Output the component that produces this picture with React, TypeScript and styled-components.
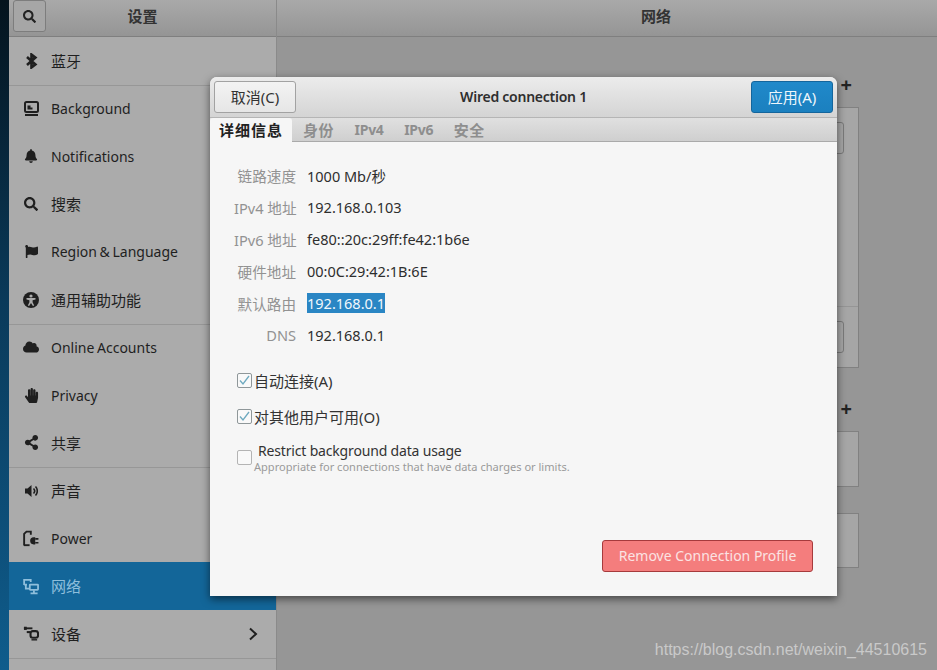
import React from "react";
import styled, { createGlobalStyle } from "styled-components";
import { FaCloud, FaFlag, FaHandPaper, FaShareAlt, FaBell, FaSearch } from "react-icons/fa";

const GlobalStyle = createGlobalStyle`
  html, body {
    margin: 0;
    padding: 0;
    background: #969696;
  }
  * {
    box-sizing: border-box;
  }
`;

const FONT = `"Noto Sans", "Noto Sans CJK SC", sans-serif`;

// page ----------------------------------------------------------------------------

const Desktop = styled.div`
  position: relative;
  display: flex;
  width: 937px;
  height: 670px;
  overflow: hidden;
  font-family: ${FONT};
  color: #1d1d1d;
`;

const Wallpaper = styled.div`
  width: 9px;
  background: linear-gradient(180deg, #04131d 0%, #0a3a5a 45%, #0f5c8c 100%);
`;

const SidePane = styled.aside`
  width: 268px;
  border-right: 1px solid #8a8a8a;
  background: #ababab;
  display: flex;
  flex-direction: column;
`;

const MainPane = styled.main`
  flex: 1;
  background: #969696;
  display: flex;
  flex-direction: column;
`;

const HeaderBar = styled.header<{ $shift?: number }>`
  height: 37px;
  flex: none;
  border-bottom: 1px solid #7f7f7f;
  background: linear-gradient(180deg, #a9a9a9, #959595);
  display: flex;
  align-items: center;
  justify-content: center;
  position: relative;
  padding: 0 0 6px ${(p) => p.$shift ?? 0}px;
  font-size: 15px;
  font-weight: 700;
  color: #333;
`;

const SearchButton = styled.div`
  position: absolute;
  left: 4px;
  top: 0;
  width: 33px;
  height: 32px;
  border: 1px solid #7d7d7d;
  border-radius: 3px;
  background: #a6a6a6;
  display: flex;
  align-items: center;
  justify-content: center;
  color: #222;
`;

// sidebar -------------------------------------------------------------------------

const Row = styled.div<{ $active?: boolean; $divider?: boolean; $cjk?: boolean }>`
  height: 47.75px;
  flex: none;
  display: flex;
  align-items: center;
  padding: 0 14px;
  font-size: ${(p) => (p.$cjk ? "15px" : "14px")};
  color: ${(p) => (p.$active ? "#8fbfdc" : "#1f1f1f")};
  background: ${(p) => (p.$active ? "#136699" : "transparent")};
  box-shadow: ${(p) => (p.$divider ? "0 1px 0 #979797" : "none")};
`;

const RowIcon = styled.span`
  width: 16px;
  height: 16px;
  margin-right: 12px;
  display: flex;
  align-items: center;
  justify-content: center;
  color: inherit;
  flex: none;
`;

const RowLabel = styled.span<{ $cjk?: boolean }>`
  flex: 1;
  padding-bottom: ${(p) => (p.$cjk ? "1px" : "0")};
  word-spacing: -1px;
  white-space: nowrap;
`;

const Chevron = styled.svg`
  width: 10px;
  height: 14px;
  margin-right: 4px;
`;

// network page behind the dialog ----------------------------------------------------

const NetworkBody = styled.div`
  padding: 70px 78px 0 78px;
`;

const PlusMark = styled.div<{ $top: number }>`
  font-size: 20px;
  font-weight: 700;
  line-height: 16px;
  height: 16px;
  color: #222;
  text-align: right;
  margin-right: 7px;
  margin-top: ${(p) => p.$top}px;
  margin-bottom: 14px;
`;

const Frame = styled.section<{ $height: number }>`
  height: ${(p) => p.$height}px;
  border: 1px solid #818181;
  background: #a6a6a6;
  margin-bottom: 26px;
  display: flex;
  flex-direction: column;
`;

const FrameRow = styled.div<{ $height: number; $divider?: boolean }>`
  height: ${(p) => p.$height}px;
  padding: 14px;
  display: flex;
  justify-content: flex-end;
  border-bottom: ${(p) => (p.$divider ? "1px solid #959595" : "none")};
`;

const GhostButton = styled.div`
  width: 40px;
  height: 32px;
  border: 1px solid #7a7a7a;
  border-radius: 3px;
`;

// dialog --------------------------------------------------------------------------

const Dialog = styled.div`
  position: absolute;
  left: 210px;
  top: 77px;
  width: 627px;
  height: 519px;
  border-radius: 7px 7px 0 0;
  background: #f6f6f6;
  box-shadow: 0 3px 9px rgba(0, 0, 0, 0.55);
  display: flex;
  flex-direction: column;
`;

const DialogHeader = styled.div`
  height: 41px;
  flex: none;
  padding: 4px;
  border-radius: 7px 7px 0 0;
  background: linear-gradient(180deg, #ececec, #d4d4d4);
  border-bottom: 1px solid #b5b5b5;
  display: flex;
  align-items: flex-start;
  justify-content: space-between;
`;

const DialogTitle = styled.div`
  font-size: 14px;
  font-weight: 600;
  letter-spacing: -0.25px;
  color: #2e2e2e;
  line-height: 31px;
`;

const HeaderButton = styled.div<{ $primary?: boolean }>`
  width: 82px;
  height: 32px;
  padding-bottom: 2px;
  border-radius: 3px;
  font-size: 15px;
  display: flex;
  align-items: center;
  justify-content: center;
  border: 1px solid ${(p) => (p.$primary ? "#14659c" : "#a2a2a2")};
  color: ${(p) => (p.$primary ? "#eef6fb" : "#333")};
  background: ${(p) =>
    p.$primary ? "linear-gradient(180deg, #2089ca, #1b80bf)" : "linear-gradient(180deg, #f3f3f3, #e6e6e6)"};
`;

const TabStrip = styled.div`
  height: 24px;
  flex: none;
  display: flex;
  align-items: stretch;
  gap: 20.6px;
  background: linear-gradient(180deg, #e0e0e0, #cfcfcf);
  border-bottom: 1px solid #aaa;
`;

const ActiveTab = styled.div`
  width: 82px;
  margin-right: -9.6px;
  margin-bottom: -1px;
  padding-left: 9px;
  border-radius: 3px 3px 0 0;
  background: #f6f6f6;
  color: #222;
  font-size: 15px;
  font-weight: 700;
  line-height: 24px;
  letter-spacing: 1px;
  white-space: nowrap;
`;

const Tab = styled.div<{ $cjk?: boolean }>`
  font-size: ${(p) => (p.$cjk ? "15px" : "14px")};
  font-weight: 700;
  line-height: 24px;
  letter-spacing: ${(p) => (p.$cjk ? "0.5px" : "-0.3px")};
  color: #8e8e8e;
  white-space: nowrap;
`;

const DialogBody = styled.div`
  flex: 1;
  position: relative;
  padding: 17px 0 0 24px;
`;

const DetailGrid = styled.div`
  display: grid;
  grid-template-columns: 62px auto;
  grid-auto-rows: 32px;
  column-gap: 11px;
  align-items: center;
  justify-content: start;
`;

const DetailLabel = styled.div`
  font-size: 14.6px;
  color: #929292;
  text-align: right;
  white-space: nowrap;
`;

const DetailValue = styled.div`
  font-size: 14.5px;
  color: #2e2e2e;
  white-space: nowrap;
`;

const Selected = styled.span`
  background: #2a86c4;
  color: #f2f8fc;
`;

const Options = styled.div`
  margin-top: 18px;
  padding-left: 3px;
  display: flex;
  flex-direction: column;
  gap: 14px;
`;

const OptionRow = styled.label`
  display: flex;
  align-items: center;
  height: 22px;
  font-size: 15px;
  color: #333;
`;

const CheckBox = styled.span`
  width: 15px;
  height: 15px;
  margin-right: 2px;
  border: 1px solid #8f9799;
  border-radius: 2px;
  background: #f9f9f9;
  flex: none;
  display: flex;
  align-items: center;
  justify-content: center;
`;

const EmptyCheckBox = styled(CheckBox)`
  border-color: #b4b4b4;
  margin-bottom: 2px;
`;

const RestrictRow = styled.div`
  display: flex;
  align-items: center;
  height: 32px;
  margin-top: 1px;
`;

const RestrictText = styled.div`
  display: flex;
  flex-direction: column;
`;

const RestrictTitle = styled.div`
  font-size: 14px;
  line-height: 18px;
  letter-spacing: -0.17px;
  color: #333;
  padding-left: 4px;
`;

const RestrictHint = styled.div`
  font-size: 11.05px;
  line-height: 14px;
  color: #9a9a9a;
  white-space: nowrap;
`;

const RemoveButton = styled.div`
  position: absolute;
  left: 392px;
  bottom: 24px;
  width: 211px;
  height: 32px;
  padding-bottom: 2px;
  border-radius: 3px;
  border: 1px solid #a63a3c;
  background: #f47d7d;
  color: #fbe3e3;
  font-size: 14px;
  display: flex;
  align-items: center;
  justify-content: center;
`;

const Watermark = styled.div`
  position: absolute;
  right: 10px;
  bottom: 10px;
  font-family: "Liberation Sans", sans-serif;
  font-size: 16px;
  line-height: 20px;
  color: #c9c9c9;
`;

// icons ---------------------------------------------------------------------------

const BluetoothIcon = () => (
  <svg width="13" height="16" viewBox="0 0 13 16" fill="none" stroke="currentColor" strokeWidth="2.6">
    <path d="M2 4l8.4 7.4-3.9 3V1.6l3.9 3-8.4 7.4" />
  </svg>
);

const BackgroundIcon = () => (
  <svg width="15" height="16" viewBox="0 0 15 16" fill="none">
    <rect x="1" y="1" width="13" height="10" rx="1.5" stroke="currentColor" strokeWidth="2" />
    <path d="M3.5 8.5V4.5h3v2h2v2z" fill="currentColor" />
    <rect x="1" y="13" width="13" height="2" fill="currentColor" />
  </svg>
);

const AccessIcon = () => (
  <svg width="16" height="16" viewBox="0 0 16 16">
    <circle cx="8" cy="8" r="8" fill="currentColor" />
    <circle cx="8" cy="4" r="1.6" fill="#ababab" />
    <path d="M3.5 6h9v1.5L9.6 8.2v2l1.6 3.3-1.3.5L8 11l-1.9 3-1.3-.5 1.6-3.3v-2L3.5 7.5z" fill="#ababab" />
  </svg>
);

const SoundIcon = () => (
  <svg width="14" height="14" viewBox="0 0 14 14" fill="none">
    <path d="M1 4.5h2.5L7.5 1v12L3.5 9.5H1z" fill="currentColor" />
    <path d="M9.5 4.5a3.6 3.6 0 0 1 0 5M11.5 2.5a6.5 6.5 0 0 1 0 9" stroke="currentColor" strokeWidth="1.6" />
  </svg>
);

const PowerIcon = () => (
  <svg width="17" height="17" viewBox="0 0 17 17" fill="none">
    <path d="M1.2 16V3.6L3.7 1.2h4.6v3.4" stroke="currentColor" strokeWidth="2" />
    <path d="M1 15.6h6" stroke="currentColor" strokeWidth="2" />
    <path d="M7.6 11a3.8 3.8 0 0 1 3.8-3.8h1.6v7.6h-1.6A3.8 3.8 0 0 1 7.6 11z" fill="currentColor" />
    <path d="M13 9h3.4M13 13h3.4" stroke="currentColor" strokeWidth="1.8" />
  </svg>
);

const NetworkIcon = () => (
  <svg width="17" height="17" viewBox="0 0 17 17" fill="none" stroke="currentColor" strokeWidth="1.9">
    <path d="M1.2 7V1.4h7v2.4M1.2 6.4h3" />
    <rect x="7.2" y="6.4" width="8.8" height="5.6" rx="0.6" />
    <path d="M11.6 12.5v3M8 15.8h7.5" />
    <path d="M3 6.4v4.4h3.5" />
  </svg>
);

const DevicesIcon = () => (
  <svg width="17" height="15" viewBox="0 0 17 15" fill="none">
    <path d="M1 2h9" stroke="currentColor" strokeWidth="2" />
    <path d="M1 2h3" stroke="currentColor" strokeWidth="3.4" />
    <path d="M4 6h4" stroke="currentColor" strokeWidth="2.2" />
    <rect x="8" y="5" width="8" height="7" rx="2.4" stroke="currentColor" strokeWidth="2.2" />
    <path d="M9 14.2h6" stroke="currentColor" strokeWidth="1.5" />
  </svg>
);

const Tick = () => (
  <svg width="11" height="11" viewBox="0 0 11 11" fill="none">
    <path d="M1 5.5l3 3.5 6-8" stroke="#6ea9bf" strokeWidth="1.3" />
  </svg>
);

// data ----------------------------------------------------------------------------

type MenuItem = {
  label: string;
  icon: React.ReactNode;
  cjk?: boolean;
  divider?: boolean;
  active?: boolean;
  more?: boolean;
};

const MENU: MenuItem[] = [
  { label: "蓝牙", icon: <BluetoothIcon />, cjk: true, divider: true },
  { label: "Background", icon: <BackgroundIcon /> },
  { label: "Notifications", icon: <FaBell size={14} /> },
  { label: "搜索", icon: <FaSearch size={14} />, cjk: true },
  { label: "Region & Language", icon: <FaFlag size={13} /> },
  { label: "通用辅助功能", icon: <AccessIcon />, cjk: true, divider: true },
  { label: "Online Accounts", icon: <FaCloud size={16} /> },
  { label: "Privacy", icon: <FaHandPaper size={15} /> },
  { label: "共享", icon: <FaShareAlt size={15} />, cjk: true, divider: true },
  { label: "声音", icon: <SoundIcon />, cjk: true },
  { label: "Power", icon: <PowerIcon /> },
  { label: "网络", icon: <NetworkIcon />, cjk: true, active: true },
  { label: "设备", icon: <DevicesIcon />, cjk: true, divider: true, more: true },
];

const DETAILS: { label: string; value: React.ReactNode }[] = [
  { label: "链路速度", value: "1000 Mb/秒" },
  { label: "IPv4 地址", value: "192.168.0.103" },
  { label: "IPv6 地址", value: "fe80::20c:29ff:fe42:1b6e" },
  { label: "硬件地址", value: "00:0C:29:42:1B:6E" },
  { label: "默认路由", value: <Selected>192.168.0.1</Selected> },
  { label: "DNS", value: "192.168.0.1" },
];

export default function App() {
  return (
    <Desktop>
      <GlobalStyle />
      <Wallpaper />
      <SidePane>
        <HeaderBar>
          <SearchButton>
            <FaSearch size={13} />
          </SearchButton>
          设置
        </HeaderBar>
        {MENU.map((item) => (
          <Row key={item.label} $active={item.active} $divider={item.divider} $cjk={item.cjk}>
            <RowIcon>{item.icon}</RowIcon>
            <RowLabel $cjk={item.cjk}>{item.label}</RowLabel>
            {item.more && (
              <Chevron viewBox="0 0 10 14" fill="none">
                <path d="M2 1.5L8 7l-6 5.5" stroke="#1f1f1f" strokeWidth="2" />
              </Chevron>
            )}
          </Row>
        ))}
      </SidePane>
      <MainPane>
        <HeaderBar $shift={98}>网络</HeaderBar>
        <NetworkBody>
          <PlusMark $top={-30}>+</PlusMark>
          <Frame $height={261}>
            <FrameRow $height={200} $divider>
              <GhostButton />
            </FrameRow>
            <FrameRow $height={60}>
              <GhostButton />
            </FrameRow>
          </Frame>
          <PlusMark $top={33}>+</PlusMark>
          <Frame $height={56} />
          <Frame $height={55} />
        </NetworkBody>
      </MainPane>

      <Dialog>
        <DialogHeader>
          <HeaderButton>取消(C)</HeaderButton>
          <DialogTitle>Wired connection 1</DialogTitle>
          <HeaderButton $primary>应用(A)</HeaderButton>
        </DialogHeader>
        <TabStrip>
          <ActiveTab>详细信息</ActiveTab>
          <Tab $cjk>身份</Tab>
          <Tab>IPv4</Tab>
          <Tab>IPv6</Tab>
          <Tab $cjk>安全</Tab>
        </TabStrip>
        <DialogBody>
          <DetailGrid>
            {DETAILS.map((d) => (
              <React.Fragment key={d.label}>
                <DetailLabel>{d.label}</DetailLabel>
                <DetailValue>{d.value}</DetailValue>
              </React.Fragment>
            ))}
          </DetailGrid>
          <Options>
            <OptionRow>
              <CheckBox>
                <Tick />
              </CheckBox>
              自动连接(A)
            </OptionRow>
            <OptionRow>
              <CheckBox>
                <Tick />
              </CheckBox>
              对其他用户可用(O)
            </OptionRow>
            <RestrictRow>
              <EmptyCheckBox />
              <RestrictText>
                <RestrictTitle>Restrict background data usage</RestrictTitle>
                <RestrictHint>Appropriate for connections that have data charges or limits.</RestrictHint>
              </RestrictText>
            </RestrictRow>
          </Options>
          <RemoveButton>Remove Connection Profile</RemoveButton>
        </DialogBody>
      </Dialog>
      <Watermark>https://blog.csdn.net/weixin_44510615</Watermark>
    </Desktop>
  );
}
